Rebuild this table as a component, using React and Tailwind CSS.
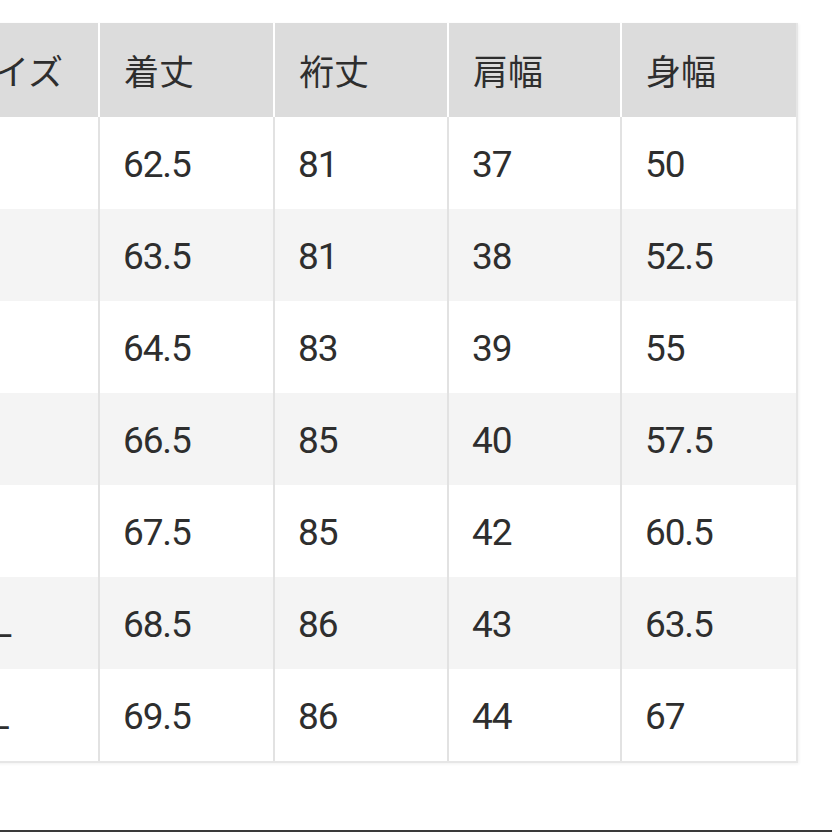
const headers = ["サイズ", "着丈", "裄丈", "肩幅", "身幅"];

const rows = [
  ["XS", "62.5", "81", "37", "50"],
  ["S", "63.5", "81", "38", "52.5"],
  ["M", "64.5", "83", "39", "55"],
  ["L", "66.5", "85", "40", "57.5"],
  ["XL", "67.5", "85", "42", "60.5"],
  ["XXL", "68.5", "86", "43", "63.5"],
  ["3XL", "69.5", "86", "44", "67"]
];

// column widths, first one runs off the left edge
const widths = ["w-[170px]", "w-[175px]", "w-[174px]", "w-[173px]", "w-[174px]"];

export default function App() {
  return (
    <div className="relative h-[832px] w-[832px] overflow-hidden bg-white">
      <div className="pt-[23px]">
        <div className="-ml-[70px] w-fit border-r-2 border-b-2 border-[#e6e6e6] shadow-[1px_1px_3px_rgba(0,0,0,0.06)]">
          <div className="flex h-[94px] bg-[#dcdcdc]">
            {headers.map((h, i) => (
              <div
                key={h}
                className={`${widths[i]} flex items-center border-white text-[35px] text-[#2e2e2e] ${i === 0 ? "pl-[29px]" : "pl-[24px]"} ${i < headers.length - 1 ? "border-r-2" : ""}`}
                style={{ fontFamily: '"Noto Sans CJK JP", "Noto Sans", sans-serif' }}
              >
                {h}
              </div>
            ))}
          </div>
          {rows.map((row, r) => (
            <div key={row[0]} className={`flex h-[92px] ${r % 2 === 1 ? "bg-[#f4f4f4]" : "bg-white"}`}>
              {row.map((cell, i) => (
                <div
                  key={i}
                  className={`${widths[i]} flex items-center border-[#e2e2e2] pt-[3px] text-[37px] tracking-[-0.03em] text-[#2e2e2e] ${i === 0 ? "pl-[18px]" : "pl-[23px]"} ${i < row.length - 1 ? "border-r-2" : ""}`}
                  style={{ fontFamily: 'Roboto, "Noto Sans", sans-serif' }}
                >
                  {cell}
                </div>
              ))}
            </div>
          ))}
        </div>
      </div>
      <div className="absolute bottom-0 left-0 h-[2px] w-full bg-[#3a3a3a]" />
    </div>
  );
}
